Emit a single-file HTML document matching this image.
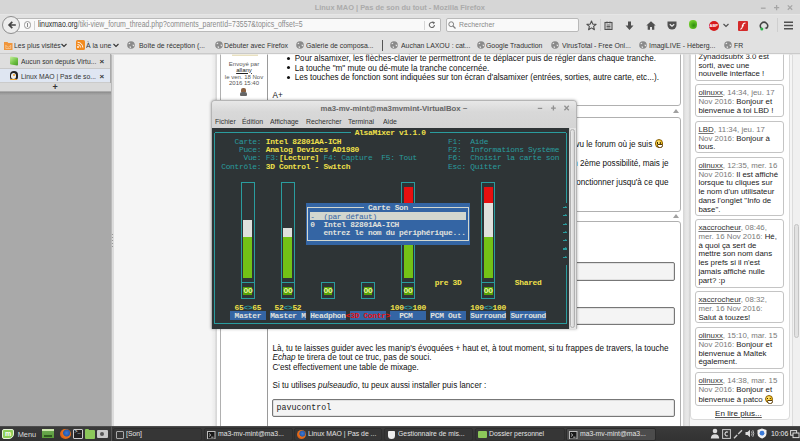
<!DOCTYPE html>
<html><head><meta charset="utf-8">
<style>
*{box-sizing:border-box}
html,body{margin:0;padding:0}
body{width:800px;height:441px;overflow:hidden;position:relative;background:#f3f3f3;font-family:"Liberation Sans",sans-serif;color:#222}
.a{position:absolute}
.nw{white-space:nowrap}
/* firefox chrome */
#title{left:0;top:0;width:800px;height:14px;background:#d6d6d6}
#nav{left:0;top:14px;width:800px;height:40.5px;background:#e1e1e1;border-top:1px solid #e6e6e6;border-bottom:2px solid #cacaca}
.bm{font-size:7.8px;color:#333;top:40.6px;transform-origin:0 0;transform:scaleX(0.885)}
.globe{width:8px;height:8px;top:41px}
/* sidebar */
#side{left:0;top:54px;width:111px;height:372px;background:#a9a9a9}
.tab{left:0;width:110px;height:14px;font-size:7.6px;color:#333}
/* forum */
.txt{font-size:8.14px;color:#111;line-height:9.6px}
.post{background:#fff;border:1px solid #cfcfcf;border-radius:3px}
.code{background:#f4f4f4;border:1px solid #777;border-radius:2px;box-shadow:inset 0 0 0 0.5px #ccc}
/* shout */
.sh{left:695px;width:89px;background:#fff;border:1px solid #c4c4c4;border-radius:3px}
.shx{left:698.4px;font-size:7.85px;line-height:8.75px;color:#222}
.shx u{color:#333;text-decoration-color:#777}
.shx .d{color:#7a7a7a}
.smile{display:inline-block;position:relative;width:8px;height:8px;border-radius:50%;background:radial-gradient(circle at 40% 35%,#ffe98a,#f0b400 75%);border:0.6px solid #8a6000;vertical-align:-1px}
.smile::before{content:"";position:absolute;left:1.8px;top:2px;width:1px;height:1.6px;background:#3a2a00;box-shadow:2.8px 0 0 #3a2a00}
.smile::after{content:"";position:absolute;left:1.2px;top:3.9px;width:4.4px;height:2px;background:#fff;border:0.6px solid #5a3a00;border-radius:1px 1px 2.5px 2.5px}
/* terminal */
#term{left:211px;top:100px;width:366px;height:229px;background:#d9d9d9;border:1px solid #b5b5b5;border-radius:4px 4px 0 0;box-shadow:0 0 3px rgba(0,0,0,.35)}
#scr{left:211.5px;top:128.4px;width:357.3px;height:200.4px;background:#2e3436;overflow:hidden}
.t{position:absolute;font-family:"Liberation Mono",monospace;font-size:7.9px;line-height:8.35px;height:8.35px;white-space:pre;letter-spacing:-0.291px}
/* taskbar */
#task{left:0;top:426px;width:800px;height:15px;background:linear-gradient(#5a5a5a 0,#3a3a3a 1.2px,#323232 100%)}
.tb{top:427.5px;height:13.5px;font-size:7.7px;color:#e4e4e4;line-height:10px;padding-left:12.5px;border-radius:2px;white-space:nowrap}
.tt{display:inline-block;transform-origin:0 50%;transform:scaleX(0.89)}
</style></head><body>

<!-- Title bar -->
<div class="a" id="title"></div>
<div class="a nw" style="left:314.7px;top:3.2px;font-size:7.45px;font-weight:bold;color:#ababab">Linux MAO | Pas de son du tout - Mozilla Firefox</div>
<svg class="a" style="left:758px;top:3px" width="36" height="10" viewBox="0 0 36 10"><path d="M2.9 5.2H7.6" stroke="#a6a6a6" stroke-width="1.3"/><path d="M16 4.6H21.2M18.6 2V7.2" stroke="#a6a6a6" stroke-width="1.3"/><path d="M29.8 2.4L34.2 6.8M34.2 2.4L29.8 6.8" stroke="#a6a6a6" stroke-width="1.3"/></svg>

<!-- Nav bar -->
<div class="a" id="nav"></div>
<!-- back button -->
<div class="a" style="left:2px;top:16px;width:18px;height:18px;border-radius:50%;background:#ededed;border:1px solid #8e8e8e;z-index:2"></div>
<svg class="a" style="left:6.5px;top:20px;z-index:3" width="10" height="10" viewBox="0 0 10 10"><path d="M8.8 5H2.3M5.3 1.8L2.1 5L5.3 8.2" stroke="#444" stroke-width="1.7" fill="none"/></svg>
<!-- url bar -->
<div class="a" style="left:17px;top:18px;width:424px;height:13.5px;background:#f9f9f9;border:1px solid #b9b9b9;border-left:none;border-radius:0 2px 2px 0"></div>
<div class="a" style="left:23.5px;top:21.2px;width:7.5px;height:7.5px;border-radius:50%;border:1px solid #9a9a9a"></div>
<div class="a" style="left:26.75px;top:24px;width:1px;height:3px;background:#888"></div><div class="a" style="left:26.75px;top:22.8px;width:1px;height:0.8px;background:#888"></div>
<div class="a" style="left:34px;top:20.5px;width:1px;height:9px;background:#d0d0d0"></div>
<div class="a nw" style="left:37.8px;top:20.2px;font-size:8.2px;color:#2a2a2a;transform-origin:0 0;transform:scaleX(0.847)">linuxmao.org<span style="color:#8a8a8a">/tiki-view_forum_thread.php?comments_parentId=73557&amp;topics_offset=5</span></div>
<div class="a" style="left:423.5px;top:20.5px;width:1px;height:9px;background:#d6d6d6"></div>
<svg class="a" style="left:428px;top:21px" width="8" height="8" viewBox="0 0 8 8"><path d="M6.5 4A2.6 2.6 0 1 1 5.3 1.7" stroke="#6a6a6a" stroke-width="1.1" fill="none"/><path d="M4.2 0.2L7 1.2L5.6 3.6Z" fill="#6a6a6a"/></svg>
<!-- search bar -->
<div class="a" style="left:445.5px;top:18px;width:133px;height:13.5px;background:#f9f9f9;border:1px solid #b9b9b9;border-radius:2px"></div>
<svg class="a" style="left:447.5px;top:21px" width="8" height="8" viewBox="0 0 8 8"><circle cx="3.2" cy="3.2" r="2.4" stroke="#808080" stroke-width="1" fill="none"/><path d="M5 5L7.5 7.5" stroke="#808080" stroke-width="1.2"/></svg>
<div class="a nw" style="left:458.5px;top:20.4px;font-size:8px;color:#8a8a8a;transform-origin:0 0;transform:scaleX(0.86)">Rechercher</div>
<!-- toolbar icons -->
<svg class="a" style="left:586px;top:20px" width="11" height="11" viewBox="0 0 11 11"><path d="M5.5 1L6.8 4.1L10.1 4.3L7.6 6.4L8.4 9.7L5.5 7.9L2.6 9.7L3.4 6.4L0.9 4.3L4.2 4.1Z" stroke="#505050" stroke-width="1.1" fill="none" stroke-linejoin="round"/></svg>
<div class="a" style="left:599.5px;top:19px;width:1px;height:12px;background:#cfcfcf"></div>
<svg class="a" style="left:604px;top:21px" width="9" height="9" viewBox="0 0 9 9"><rect x="1" y="1.5" width="7" height="7" stroke="#505050" stroke-width="1.1" fill="none"/><path d="M3 0.5V2.5M6 0.5V2.5M2.5 4H6.5M2.5 5.5H6.5M2.5 7H6.5" stroke="#505050" stroke-width="0.9"/></svg>
<svg class="a" style="left:625px;top:20.5px" width="9" height="10" viewBox="0 0 9 10"><path d="M3 0.5H6V4.5H8.5L4.5 9L0.5 4.5H3Z" fill="#505050"/></svg>
<svg class="a" style="left:645.5px;top:20.5px" width="10" height="9" viewBox="0 0 10 9"><path d="M5 0.3L9.7 4.6H8.3V8.7H6V6H4V8.7H1.7V4.6H0.3Z" fill="#505050"/></svg>
<svg class="a" style="left:667px;top:21px" width="10" height="9" viewBox="0 0 10 9"><path d="M0.5 0.5H9.5V4A4.5 4.5 0 0 1 0.5 4Z" fill="#505050"/><path d="M2.8 3.3L5 5.3L7.2 3.3" stroke="#eee" stroke-width="1.2" fill="none"/></svg>
<div class="a" style="left:688.6px;top:20.4px;width:8.2px;height:8.6px;border-radius:45% 45% 50% 50%;background:radial-gradient(circle at 60% 60%,#2e8a10 0,#58b820 45%,#8ee040 100%)"></div>
<div class="a" style="left:709px;top:20.5px;width:10px;height:10px;border-radius:50%;background:#d61a1a"></div>
<div class="a nw" style="left:709.6px;top:23.3px;font-size:4px;font-weight:bold;color:#fff">ABP</div>
<svg class="a" style="left:723px;top:23px" width="6" height="5" viewBox="0 0 6 5"><path d="M0.5 1L3 3.5L5.5 1" stroke="#505050" stroke-width="1.2" fill="none"/></svg>
<div class="a" style="left:738px;top:20.5px;width:10px;height:10px;background:#d42a2a;border-radius:1px"></div>
<svg class="a" style="left:738px;top:20.5px" width="10" height="10" viewBox="0 0 10 10"><path d="M7.5 2C5 2 4.5 4 4.3 6C4 8 3 8.2 2.2 8.2" stroke="#fff" stroke-width="1.1" fill="none"/><path d="M3.8 4.8H6" stroke="#fff" stroke-width="0.9"/></svg>
<svg class="a" style="left:759px;top:20.5px" width="10" height="10" viewBox="0 0 10 10"><path d="M2.2 7.2A3.6 3.6 0 1 1 7.8 7.2" stroke="#444" stroke-width="1.5" fill="none"/><path d="M8.8 5.5L7.8 8.3L5.4 7" fill="#505050"/><circle cx="2.8" cy="8" r="1.5" fill="#2cb34a"/></svg>
<div class="a" style="left:776.5px;top:18px;width:1px;height:14px;background:#cfcfcf"></div>
<svg class="a" style="left:784px;top:21px" width="9" height="9" viewBox="0 0 9 9"><path d="M0 1.2H9M0 4.5H9M0 7.8H9" stroke="#505050" stroke-width="1.4"/></svg>

<!-- bookmarks -->
<svg class="a" style="left:4px;top:40.5px" width="8.5" height="9.5" viewBox="0 0 8.5 9.5"><path d="M0 1H3.5L4.3 2H8.5V9.5H0Z" fill="#f0963c"/><path d="M1.8 4.5L4.2 6.3L6.7 4.5M1.8 4V7.5H6.7V4" stroke="#fbd0a0" stroke-width="0.7" fill="none"/></svg>
<div class="a nw bm" style="left:14px">Les plus visités</div>
<svg class="a" style="left:61px;top:42.5px" width="6" height="5" viewBox="0 0 6 5"><path d="M0.5 1L3 3.5L5.5 1" stroke="#333" stroke-width="1.1" fill="none"/></svg>
<div class="a" style="left:76px;top:40.3px;width:8.7px;height:9.3px;background:#f28a1e;border-radius:1.5px"></div>
<svg class="a" style="left:76.3px;top:41px" width="8" height="8" viewBox="0 0 8 8"><circle cx="2" cy="6" r="0.9" fill="#fff"/><path d="M1.5 3.4A3.2 3.2 0 0 1 4.6 6.5M1.5 1.2A5.4 5.4 0 0 1 6.8 6.5" stroke="#fff" stroke-width="0.9" fill="none"/></svg>
<div class="a nw bm" style="left:85.5px">À la une</div>
<svg class="a" style="left:112.5px;top:42.5px" width="6" height="5" viewBox="0 0 6 5"><path d="M0.5 1L3 3.5L5.5 1" stroke="#333" stroke-width="1.1" fill="none"/></svg>
<svg class="a globe" style="left:127px" viewBox="0 0 8 8"><circle cx="4" cy="4" r="3.8" fill="#8a8a8a"/><path d="M1.6 2.2Q2.6 1.2 3.4 2Q3 3.2 1.8 3.2Z M5.6 3.6Q6.8 3.4 7.2 4.6Q6.6 5.6 5.8 5Z M2.6 5.2Q3.8 5 4.2 6.2Q3.6 7.4 2.8 6.8Z" fill="#e8e8e8"/></svg><div class="a nw bm" style="left:138.5px">Boîte de réception (...</div>
<svg class="a globe" style="left:214.5px" viewBox="0 0 8 8"><circle cx="4" cy="4" r="3.8" fill="#8a8a8a"/><path d="M1.6 2.2Q2.6 1.2 3.4 2Q3 3.2 1.8 3.2Z M5.6 3.6Q6.8 3.4 7.2 4.6Q6.6 5.6 5.8 5Z M2.6 5.2Q3.8 5 4.2 6.2Q3.6 7.4 2.8 6.8Z" fill="#e8e8e8"/></svg><div class="a nw bm" style="left:223.8px">Débuter avec Firefox</div>
<svg class="a globe" style="left:296px" viewBox="0 0 8 8"><circle cx="4" cy="4" r="3.8" fill="#8a8a8a"/><path d="M1.6 2.2Q2.6 1.2 3.4 2Q3 3.2 1.8 3.2Z M5.6 3.6Q6.8 3.4 7.2 4.6Q6.6 5.6 5.8 5Z M2.6 5.2Q3.8 5 4.2 6.2Q3.6 7.4 2.8 6.8Z" fill="#e8e8e8"/></svg><div class="a nw bm" style="left:306px">Galerie de composa...</div>
<div class="a" style="left:382px;top:40px;width:1px;height:11px;background:#555"></div>
<svg class="a globe" style="left:389.8px" viewBox="0 0 8 8"><circle cx="4" cy="4" r="3.8" fill="#8a8a8a"/><path d="M1.6 2.2Q2.6 1.2 3.4 2Q3 3.2 1.8 3.2Z M5.6 3.6Q6.8 3.4 7.2 4.6Q6.6 5.6 5.8 5Z M2.6 5.2Q3.8 5 4.2 6.2Q3.6 7.4 2.8 6.8Z" fill="#e8e8e8"/></svg><div class="a nw bm" style="left:400.5px">Auchan LAXOU : cat...</div>
<svg class="a globe" style="left:476.6px" viewBox="0 0 8 8"><circle cx="4" cy="4" r="3.8" fill="#8a8a8a"/><path d="M1.6 2.2Q2.6 1.2 3.4 2Q3 3.2 1.8 3.2Z M5.6 3.6Q6.8 3.4 7.2 4.6Q6.6 5.6 5.8 5Z M2.6 5.2Q3.8 5 4.2 6.2Q3.6 7.4 2.8 6.8Z" fill="#e8e8e8"/></svg><div class="a nw bm" style="left:486.2px">Google Traduction</div>
<svg class="a globe" style="left:551px" viewBox="0 0 8 8"><circle cx="4" cy="4" r="3.8" fill="#8a8a8a"/><path d="M1.6 2.2Q2.6 1.2 3.4 2Q3 3.2 1.8 3.2Z M5.6 3.6Q6.8 3.4 7.2 4.6Q6.6 5.6 5.8 5Z M2.6 5.2Q3.8 5 4.2 6.2Q3.6 7.4 2.8 6.8Z" fill="#e8e8e8"/></svg><div class="a nw bm" style="left:561.5px">VirusTotal - Free Onl...</div>
<svg class="a globe" style="left:638.5px" viewBox="0 0 8 8"><circle cx="4" cy="4" r="3.8" fill="#8a8a8a"/><path d="M1.6 2.2Q2.6 1.2 3.4 2Q3 3.2 1.8 3.2Z M5.6 3.6Q6.8 3.4 7.2 4.6Q6.6 5.6 5.8 5Z M2.6 5.2Q3.8 5 4.2 6.2Q3.6 7.4 2.8 6.8Z" fill="#e8e8e8"/></svg><div class="a nw bm" style="left:648.5px">ImagiLIVE - Héberg...</div>
<svg class="a globe" style="left:723.5px" viewBox="0 0 8 8"><circle cx="4" cy="4" r="3.8" fill="#8a8a8a"/><path d="M1.6 2.2Q2.6 1.2 3.4 2Q3 3.2 1.8 3.2Z M5.6 3.6Q6.8 3.4 7.2 4.6Q6.6 5.6 5.8 5Z M2.6 5.2Q3.8 5 4.2 6.2Q3.6 7.4 2.8 6.8Z" fill="#e8e8e8"/></svg><div class="a nw bm" style="left:734px">FR</div>

<!-- sidebar -->
<div class="a" id="side"></div>
<div class="a tab" style="top:54.3px;height:14.4px;background:#dedede;border-bottom:1px solid #c8c8c8"></div>
<div class="a" style="left:10px;top:57px;width:7.5px;height:8px;background:linear-gradient(135deg,#c8f0a0,#6cc040 60%,#4a9a2a);border-radius:1px;transform:skewY(8deg)"></div>
<div class="a nw" style="left:21.3px;top:57.3px;font-size:7.9px;color:#333;transform-origin:0 0;transform:scaleX(0.86)">Aucun son depuis Virtu...</div>
<div class="a nw" style="left:99.5px;top:57px;font-size:8px;color:#333;font-weight:bold">×</div>
<div class="a tab" style="top:68.7px;background:#dfe6f2;border-bottom:1px solid #cbcbcb"></div>
<div class="a" style="left:9.5px;top:71px;width:8px;height:8.5px;background:#222;border-radius:4px 4px 3px 3px"></div>
<div class="a" style="left:11px;top:73.2px;width:5px;height:5.5px;background:#eee;border-radius:2.5px"></div>
<div class="a" style="left:12.5px;top:74px;width:2px;height:1.5px;background:#f0a020;border-radius:1px"></div>
<div class="a" style="left:10px;top:78.8px;width:7px;height:1.4px;background:#f0a020;border-radius:1px"></div>
<div class="a nw" style="left:21.3px;top:71.6px;font-size:7.9px;color:#333;transform-origin:0 0;transform:scaleX(0.86)">Linux MAO | Pas de so...</div>
<div class="a nw" style="left:99.5px;top:71.5px;font-size:8px;color:#333;font-weight:bold">×</div>
<div class="a" style="left:0;top:82.7px;width:110.5px;height:8.5px;background:#d9d9d9"></div>
<div class="a" style="left:0;top:91.2px;width:110.5px;height:4.5px;background:linear-gradient(#bdbdbd 0,#8e8e8e 1.3px,#9c9c9c 2.5px,#a9a9a9 4.5px)"></div>
<div class="a nw" style="left:52.5px;top:81.5px;font-size:9px;color:#333;font-weight:bold">+</div>


<!-- page -->
<div class="a" style="left:0;top:0;width:800px;height:441px;clip-path:inset(54.5px 0 15px 0)">
<div class="a" style="left:111px;top:54px;width:689px;height:372px;background:#f5f5f5"></div>
<div class="a" style="left:110.5px;top:54px;width:3.5px;height:372px;background:linear-gradient(90deg,#a2a2a2 0,#c8c8c8 0.8px,#dcdcdc 1.2px,#dcdcdc 2.8px,#ececec 3.5px)"></div>
<div class="a" style="left:112px;top:234px;width:1.2px;height:13px;background:repeating-linear-gradient(#999 0,#999 1px,transparent 1px,transparent 3px)"></div>

<!-- forum wrapper -->
<div class="a" style="left:211px;top:54px;width:6px;height:372px;background:linear-gradient(90deg,rgba(0,0,0,0) 0,rgba(0,0,0,.04) 60%,rgba(0,0,0,.13) 85%,rgba(0,0,0,.1) 100%)"></div>
<div class="a" style="left:217px;top:54px;width:466px;height:372px;background:#fff"></div>
<div class="a" style="left:683px;top:54px;width:7px;height:372px;background:linear-gradient(90deg,#d4d4d4 0,#e6e6e6 40%,#e8e8e8 75%,#cfcfcf 100%)"></div>
<!-- post 1 -->
<div class="a" style="left:220px;top:40px;width:461px;height:66px;border:1px solid #b0b0b0;border-radius:3px;background:#fff"></div>
<div class="a" style="left:267px;top:54px;width:1px;height:51px;background:#9a9a9a"></div>
<div class="a" style="left:232px;top:54px;width:26px;height:2px;background:#e8e0c0"></div>
<div class="a nw" style="left:221px;width:46px;text-align:center;top:60.6px;font-size:6px;line-height:7px;color:#555">Envoyé par</div>
<div class="a nw" style="left:221px;width:46px;text-align:center;top:66.5px;font-size:6px;line-height:7px;color:#222"><u>allany</u></div>
<div class="a nw" style="left:221px;width:46px;text-align:center;top:74.2px;font-size:6px;line-height:7px;color:#555">le ven. 18 Nov</div>
<div class="a nw" style="left:221px;width:46px;text-align:center;top:80.3px;font-size:6px;line-height:7px;color:#555">2016 15:40</div>
<div class="a" style="left:241px;top:88px;width:5px;height:4px;border-radius:2px 2px 0 0;background:#8a6040"></div>
<div class="a" style="left:240px;top:91.5px;width:7px;height:4px;border-radius:2px 2px 1px 1px;background:#666"></div>
<div class="a" style="left:287.2px;top:57.1px;width:3.2px;height:3.2px;border-radius:50%;background:#111"></div>
<div class="a" style="left:287.2px;top:66.3px;width:3.2px;height:3.2px;border-radius:50%;background:#111"></div>
<div class="a" style="left:287.2px;top:75.6px;width:3.2px;height:3.2px;border-radius:50%;background:#111"></div>
<div class="a nw txt" style="left:294.7px;top:54.2px">Pour alsamixer, les flèches-clavier te permettront de te déplacer puis de régler dans chaque tranche.<br>La touche "m" mute ou dé-mute la tranche concernée.<br>Les touches de fonction sont indiquées sur ton écran d'alsamixer (entrées, sorties, autre carte, etc...).</div>
<div class="a nw txt" style="left:272.5px;top:91px">A+</div>
<div class="a" style="left:672.5px;top:108.5px;width:0;height:0;border-left:3.8px solid transparent;border-right:3.8px solid transparent;border-bottom:4.5px solid #a0a0a0"></div>
<!-- post 2 -->
<div class="a" style="left:220px;top:116.5px;width:461px;height:95px;border:1px solid #b0b0b0;border-radius:3px;background:#fff"></div>
<div class="a nw txt" style="right:137px;top:139.4px">Ceci dit, tu n'as peut-être pas vu le forum où je suis <span class="smile" style="width:8.5px;height:8.5px"></span></div>
<div class="a nw txt" style="right:131.5px;top:159.3px">alors il te reste la <span style="color:#2a6fb8">lien </span> 2ème possibilité, mais je</div>
<div class="a nw txt" style="right:131.5px;top:178.3px">comme alsamixer qui doit fonctionner jusqu'à ce que</div>
<div class="a" style="left:672.5px;top:214px;width:0;height:0;border-left:3.8px solid transparent;border-right:3.8px solid transparent;border-bottom:4.5px solid #a0a0a0"></div>
<!-- post 3 -->
<div class="a" style="left:220px;top:221px;width:461px;height:220px;border:1px solid #b0b0b0;border-radius:3px;background:#fff"></div>
<div class="a" style="left:267px;top:222px;width:1px;height:204px;background:#9a9a9a"></div>
<div class="a code" style="left:272px;top:262px;width:403px;height:18.5px"></div>
<div class="a code" style="left:272px;top:306.5px;width:403px;height:18.5px"></div>
<div class="a nw txt" style="left:272.5px;top:343.5px">Là, tu te laisses guider avec les manip's évoquées + haut et, à tout moment, si tu frappes de travers, la touche<br><i>Echap</i> te tirera de tout ce truc, pas de souci.<br>C'est effectivement une table de mixage.</div>
<div class="a nw txt" style="left:272.5px;top:380.5px">Si tu utilises <i>pulseaudio</i>, tu peux aussi installer puis lancer :</div>
<div class="a code" style="left:272px;top:399px;width:403px;height:17.8px"></div>
<div class="a nw" style="left:276.5px;top:403px;font-family:'Liberation Mono',monospace;font-size:8.3px;color:#222">pavucontrol</div>

<!-- shoutbox -->
<div class="a" style="left:689.5px;top:30px;width:100px;height:390px;background:#fff;border:1px solid #dadada;border-radius:4px"></div>
<div class="a" style="left:792px;top:54px;width:8px;height:372px;background:#f0f0f0;border-left:1px solid #dcdcdc"></div>
<div class="a" style="left:793.5px;top:224px;width:5px;height:114px;background:#e2e2e2;border:1px solid #c4c4c4;border-radius:3px"></div>
<div class="a sh" style="top:40px;height:41.0px"></div>
<div class="a nw shx" style="top:52.8px">Zynaddsubfx 3.0 est<br>sorti, avec une<br>nouvelle interface !</div>
<div class="a sh" style="top:84.4px;height:32.6px"></div>
<div class="a nw shx" style="top:89.3px"><u>olinuxx</u><span class="d">, 14:34, jeu. 17</span><br><span class="d">Nov 2016: </span>Bonjour et<br>bienvenue à toi LBD !</div>
<div class="a sh" style="top:120.9px;height:32.1px"></div>
<div class="a nw shx" style="top:125.8px"><u>LBD</u><span class="d">, 11:34, jeu. 17</span><br><span class="d">Nov 2016: </span>Bonjour à<br>tous.</div>
<div class="a sh" style="top:157px;height:58.6px"></div>
<div class="a nw shx" style="top:161.9px"><u>olinuxx</u><span class="d">, 12:35, mer. 16</span><br><span class="d">Nov 2016: </span>Il est affiché<br>lorsque tu cliques sur<br>le nom d'un utilisateur<br>dans l'onglet "Info de<br>base".</div>
<div class="a sh" style="top:219.2px;height:68.4px"></div>
<div class="a nw shx" style="top:224.1px"><u>xaccrocheur</u><span class="d">, 08:46,</span><br><span class="d">mer. 16 Nov 2016: </span>Hé,<br>à quoi ça sert de<br>mettre son nom dans<br>les prefs si il n'est<br>jamais affiché nulle<br>part? :p</div>
<div class="a sh" style="top:291.1px;height:32.3px"></div>
<div class="a nw shx" style="top:296.0px"><u>xaccrocheur</u><span class="d">, 08:32,</span><br><span class="d">mer. 16 Nov 2016:</span><br>Salut à touzes!</div>
<div class="a sh" style="top:327.2px;height:41.5px"></div>
<div class="a nw shx" style="top:332.1px"><u>olinuxx</u><span class="d">, 15:10, mar. 15</span><br><span class="d">Nov 2016: </span>Bonjour et<br>bienvenue à Maltek<br>également.</div>
<div class="a sh" style="top:372.3px;height:33.4px"></div>
<div class="a nw shx" style="top:377.2px"><u>olinuxx</u><span class="d">, 14:38, mar. 15</span><br><span class="d">Nov 2016: </span>Bonjour et<br>bienvenue à patco <span class="smile"></span></div>
<div class="a nw" style="left:715px;top:408.6px;font-size:8.1px;color:#222;text-decoration:underline;text-decoration-color:#555">En lire plus...</div>
<!--SHOUT-->
</div>

<!-- terminal window -->
<div class="a" id="term"></div>
<div class="a" style="left:212px;top:101px;width:364px;height:27px;border-radius:3px 3px 0 0;background:linear-gradient(#e8e8e8,#d8d8d8 40%,#d4d4d4)"></div>
<div class="a nw" style="left:320.6px;top:103.5px;font-size:7.75px;font-weight:bold;color:#666">ma3-mv-mint@ma3mvmint-VirtualBox ~</div>
<svg class="a" style="left:536px;top:104px" width="34" height="8" viewBox="0 0 34 8"><path d="M1.8 4.4H6.2" stroke="#909090" stroke-width="1.2"/><path d="M15 4.1H19.8M17.4 1.6V6.6" stroke="#909090" stroke-width="1.3"/><path d="M28.4 1.8L32.8 6.2M32.8 1.8L28.4 6.2" stroke="#909090" stroke-width="1.3"/></svg>
<div class="a nw" style="left:215.1px;top:116.55px;font-size:7.8px;color:#333;transform-origin:0 0;transform:scaleX(0.885)">Fichier</div>
<div class="a nw" style="left:242px;top:116.55px;font-size:7.8px;color:#333;transform-origin:0 0;transform:scaleX(0.885)">Édition</div>
<div class="a nw" style="left:270px;top:116.55px;font-size:7.8px;color:#333;transform-origin:0 0;transform:scaleX(0.885)">Affichage</div>
<div class="a nw" style="left:306.3px;top:116.55px;font-size:7.8px;color:#333;transform-origin:0 0;transform:scaleX(0.885)">Rechercher</div>
<div class="a nw" style="left:348.4px;top:116.55px;font-size:7.8px;color:#333;transform-origin:0 0;transform:scaleX(0.885)">Terminal</div>
<div class="a nw" style="left:382.7px;top:116.55px;font-size:7.8px;color:#333;transform-origin:0 0;transform:scaleX(0.885)">Aide</div>
<div class="a" id="scr"></div>
<div class="a" style="left:568.8px;top:128.4px;width:7.5px;height:200.4px;background:#e4e4e4;border-left:1px solid #cfcfcf"></div>
<div class="a" style="left:570.2px;top:129px;width:5px;height:198.5px;background:linear-gradient(90deg,#ececec,#d4d4d4);border:1px solid #b0b0b0;border-radius:3px"></div>
<div class="a" style="left:214.52px;top:132.09px;width:136.19px;height:1.0px;background:#2a9c9e"></div>
<div class="a" style="left:430.30px;top:132.09px;width:136.19px;height:1.0px;background:#2a9c9e"></div>
<div class="a" style="left:214.02px;top:132.59px;width:1.0px;height:191.86px;background:#2a9c9e"></div>
<div class="a" style="left:565.50px;top:132.59px;width:1.0px;height:70.39px;background:#2a9c9e"></div>
<div class="a" style="left:565.50px;top:264.88px;width:1.0px;height:59.57px;background:#2a9c9e"></div>
<div class="a" style="left:214.52px;top:323.45px;width:351.97px;height:1.0px;background:#2a9c9e"></div>
<div class="t" style="left:354.67px;top:129.33px;color:#f0e04a;font-weight:bold;">AlsaMixer v1.1.0</div>
<div class="t" style="left:234.55px;top:137.65px;color:#2a9c9e;">Carte:</div>
<div class="t" style="left:265.69px;top:137.65px;color:#f0e04a;font-weight:bold;">Intel 82801AA-ICH</div>
<div class="t" style="left:238.99px;top:145.97px;color:#2a9c9e;">Puce:</div>
<div class="t" style="left:265.69px;top:145.97px;color:#f0e04a;font-weight:bold;">Analog Devices AD1980</div>
<div class="t" style="left:243.44px;top:154.29px;color:#2a9c9e;">Vue:</div>
<div class="t" style="left:265.69px;top:154.29px;color:#2a9c9e;">F3:</div>
<div class="t" style="left:279.04px;top:154.29px;color:#f0e04a;font-weight:bold;">[Lecture]</div>
<div class="t" style="left:323.52px;top:154.29px;color:#2a9c9e;">F4: Capture  F5: Tout</div>
<div class="t" style="left:221.20px;top:162.61px;color:#2a9c9e;">Contrôle:</div>
<div class="t" style="left:265.69px;top:162.61px;color:#f0e04a;font-weight:bold;">3D Control - Switch</div>
<div class="t" style="left:448.10px;top:137.65px;color:#2a9c9e;">F1:  Aide</div>
<div class="t" style="left:448.10px;top:145.97px;color:#2a9c9e;">F2:  Informations Système</div>
<div class="t" style="left:448.10px;top:154.29px;color:#2a9c9e;">F6:  Choisir la carte son</div>
<div class="t" style="left:448.10px;top:162.61px;color:#2a9c9e;">Esc: Quitter</div>
<div class="a" style="left:563.20px;top:206.87px;width:4px;height:1.3px;background:#2a9c9e"></div>
<div class="a" style="left:565.00px;top:205.87px;width:0;height:0;border-top:1.6px solid transparent;border-bottom:1.6px solid transparent;border-left:2.4px solid #2a9c9e"></div>
<div class="a" style="left:563.20px;top:215.19px;width:4px;height:1.3px;background:#2a9c9e"></div>
<div class="a" style="left:565.00px;top:214.19px;width:0;height:0;border-top:1.6px solid transparent;border-bottom:1.6px solid transparent;border-left:2.4px solid #2a9c9e"></div>
<div class="a" style="left:563.20px;top:223.51px;width:4px;height:1.3px;background:#2a9c9e"></div>
<div class="a" style="left:565.00px;top:222.51px;width:0;height:0;border-top:1.6px solid transparent;border-bottom:1.6px solid transparent;border-left:2.4px solid #2a9c9e"></div>
<div class="a" style="left:563.20px;top:231.83px;width:4px;height:1.3px;background:#2a9c9e"></div>
<div class="a" style="left:565.00px;top:230.83px;width:0;height:0;border-top:1.6px solid transparent;border-bottom:1.6px solid transparent;border-left:2.4px solid #2a9c9e"></div>
<div class="a" style="left:563.20px;top:240.15px;width:4px;height:1.3px;background:#2a9c9e"></div>
<div class="a" style="left:565.00px;top:239.15px;width:0;height:0;border-top:1.6px solid transparent;border-bottom:1.6px solid transparent;border-left:2.4px solid #2a9c9e"></div>
<div class="a" style="left:563.20px;top:248.47px;width:4px;height:1.3px;background:#2a9c9e"></div>
<div class="a" style="left:565.00px;top:247.47px;width:0;height:0;border-top:1.6px solid transparent;border-bottom:1.6px solid transparent;border-left:2.4px solid #2a9c9e"></div>
<div class="a" style="left:563.20px;top:256.79px;width:4px;height:1.3px;background:#2a9c9e"></div>
<div class="a" style="left:565.00px;top:255.79px;width:0;height:0;border-top:1.6px solid transparent;border-bottom:1.6px solid transparent;border-left:2.4px solid #2a9c9e"></div>
<div class="a" style="left:241.22px;top:182.01px;width:13.85px;height:1.0px;background:#2a9c9e"></div>
<div class="a" style="left:241.22px;top:298.49px;width:13.85px;height:1.0px;background:#2a9c9e"></div>
<div class="a" style="left:240.72px;top:182.51px;width:1.0px;height:116.98px;background:#2a9c9e"></div>
<div class="a" style="left:254.07px;top:182.51px;width:1.0px;height:116.98px;background:#2a9c9e"></div>
<div class="a" style="left:241.22px;top:281.85px;width:13.85px;height:1.0px;background:#2a9c9e"></div>
<div class="a" style="left:243.44px;top:219.95px;width:8.90px;height:16.64px;background:#e0e1dd;"></div>
<div class="a" style="left:243.44px;top:236.59px;width:8.90px;height:41.60px;background:#73c216;"></div>
<div class="a" style="left:243.44px;top:286.51px;width:8.90px;height:8.32px;background:#56a208;"></div>
<div class="t" style="left:243.44px;top:287.41px;color:#e8f0a0;font-weight:bold;">OO</div>
<div class="a" style="left:281.26px;top:182.01px;width:13.85px;height:1.0px;background:#2a9c9e"></div>
<div class="a" style="left:281.26px;top:298.49px;width:13.85px;height:1.0px;background:#2a9c9e"></div>
<div class="a" style="left:280.76px;top:182.51px;width:1.0px;height:116.98px;background:#2a9c9e"></div>
<div class="a" style="left:294.11px;top:182.51px;width:1.0px;height:116.98px;background:#2a9c9e"></div>
<div class="a" style="left:281.26px;top:281.85px;width:13.85px;height:1.0px;background:#2a9c9e"></div>
<div class="a" style="left:283.48px;top:228.27px;width:8.90px;height:8.32px;background:#e0e1dd;"></div>
<div class="a" style="left:283.48px;top:236.59px;width:8.90px;height:41.60px;background:#73c216;"></div>
<div class="a" style="left:283.48px;top:286.51px;width:8.90px;height:8.32px;background:#56a208;"></div>
<div class="t" style="left:283.48px;top:287.41px;color:#e8f0a0;font-weight:bold;">OO</div>
<div class="a" style="left:321.30px;top:281.85px;width:13.85px;height:1.0px;background:#2a9c9e"></div>
<div class="a" style="left:321.30px;top:298.49px;width:13.85px;height:1.0px;background:#2a9c9e"></div>
<div class="a" style="left:320.80px;top:282.35px;width:1.0px;height:17.14px;background:#2a9c9e"></div>
<div class="a" style="left:334.15px;top:282.35px;width:1.0px;height:17.14px;background:#2a9c9e"></div>
<div class="a" style="left:323.52px;top:286.51px;width:8.90px;height:8.32px;background:#56a208;"></div>
<div class="t" style="left:323.52px;top:287.41px;color:#e8f0a0;font-weight:bold;">OO</div>
<div class="a" style="left:361.34px;top:281.85px;width:13.85px;height:1.0px;background:#2a9c9e"></div>
<div class="a" style="left:361.34px;top:298.49px;width:13.85px;height:1.0px;background:#2a9c9e"></div>
<div class="a" style="left:360.84px;top:282.35px;width:1.0px;height:17.14px;background:#2a9c9e"></div>
<div class="a" style="left:374.19px;top:282.35px;width:1.0px;height:17.14px;background:#2a9c9e"></div>
<div class="a" style="left:363.57px;top:286.51px;width:8.90px;height:8.32px;background:#56a208;"></div>
<div class="t" style="left:363.57px;top:287.41px;color:#e8f0a0;font-weight:bold;">OO</div>
<div class="a" style="left:401.38px;top:182.01px;width:13.85px;height:1.0px;background:#2a9c9e"></div>
<div class="a" style="left:401.38px;top:298.49px;width:13.85px;height:1.0px;background:#2a9c9e"></div>
<div class="a" style="left:400.88px;top:182.51px;width:1.0px;height:116.98px;background:#2a9c9e"></div>
<div class="a" style="left:414.23px;top:182.51px;width:1.0px;height:116.98px;background:#2a9c9e"></div>
<div class="a" style="left:401.38px;top:281.85px;width:13.85px;height:1.0px;background:#2a9c9e"></div>
<div class="a" style="left:403.61px;top:186.67px;width:8.90px;height:16.64px;background:#e81010;"></div>
<div class="a" style="left:403.61px;top:203.31px;width:8.90px;height:33.28px;background:#e0e1dd;"></div>
<div class="a" style="left:403.61px;top:236.59px;width:8.90px;height:41.60px;background:#73c216;"></div>
<div class="a" style="left:403.61px;top:286.51px;width:8.90px;height:8.32px;background:#56a208;"></div>
<div class="t" style="left:403.61px;top:287.41px;color:#e8f0a0;font-weight:bold;">OO</div>
<div class="a" style="left:481.46px;top:182.01px;width:13.85px;height:1.0px;background:#2a9c9e"></div>
<div class="a" style="left:481.46px;top:298.49px;width:13.85px;height:1.0px;background:#2a9c9e"></div>
<div class="a" style="left:480.96px;top:182.51px;width:1.0px;height:116.98px;background:#2a9c9e"></div>
<div class="a" style="left:494.31px;top:182.51px;width:1.0px;height:116.98px;background:#2a9c9e"></div>
<div class="a" style="left:481.46px;top:281.85px;width:13.85px;height:1.0px;background:#2a9c9e"></div>
<div class="a" style="left:483.69px;top:186.67px;width:8.90px;height:16.64px;background:#e81010;"></div>
<div class="a" style="left:483.69px;top:203.31px;width:8.90px;height:33.28px;background:#e0e1dd;"></div>
<div class="a" style="left:483.69px;top:236.59px;width:8.90px;height:41.60px;background:#73c216;"></div>
<div class="a" style="left:483.69px;top:286.51px;width:8.90px;height:8.32px;background:#56a208;"></div>
<div class="t" style="left:483.69px;top:287.41px;color:#e8f0a0;font-weight:bold;">OO</div>
<div class="t" style="left:234.55px;top:304.05px;color:#f0e04a;font-weight:bold;">65</div>
<div class="t" style="left:243.44px;top:304.05px;color:#2a9c9e;font-weight:bold;">&lt;&gt;</div>
<div class="t" style="left:252.34px;top:304.05px;color:#f0e04a;font-weight:bold;">65</div>
<div class="t" style="left:274.59px;top:304.05px;color:#f0e04a;font-weight:bold;">52</div>
<div class="t" style="left:283.48px;top:304.05px;color:#2a9c9e;font-weight:bold;">&lt;&gt;</div>
<div class="t" style="left:292.38px;top:304.05px;color:#f0e04a;font-weight:bold;">52</div>
<div class="t" style="left:390.26px;top:304.05px;color:#f0e04a;font-weight:bold;">100</div>
<div class="t" style="left:403.61px;top:304.05px;color:#2a9c9e;font-weight:bold;">&lt;&gt;</div>
<div class="t" style="left:412.50px;top:304.05px;color:#f0e04a;font-weight:bold;">100</div>
<div class="t" style="left:470.34px;top:304.05px;color:#f0e04a;font-weight:bold;">100</div>
<div class="t" style="left:483.69px;top:304.05px;color:#2a9c9e;font-weight:bold;">&lt;&gt;</div>
<div class="t" style="left:492.59px;top:304.05px;color:#f0e04a;font-weight:bold;">100</div>
<div class="t" style="left:434.75px;top:279.09px;color:#f0e04a;font-weight:bold;">pre 3D</div>
<div class="t" style="left:514.83px;top:279.09px;color:#f0e04a;font-weight:bold;">Shared</div>
<div class="a" style="left:230.10px;top:311.47px;width:35.59px;height:8.32px;background:#3465a4;"></div>
<div class="t" style="left:230.10px;top:312.37px;color:#e0e1dd;font-weight:bold;"> Master </div>
<div class="a" style="left:270.14px;top:311.47px;width:35.59px;height:8.32px;background:#3465a4;"></div>
<div class="t" style="left:270.14px;top:312.37px;color:#e0e1dd;font-weight:bold;">Master M</div>
<div class="a" style="left:310.18px;top:311.47px;width:35.59px;height:8.32px;background:#3465a4;"></div>
<div class="t" style="left:310.18px;top:312.37px;color:#e0e1dd;font-weight:bold;">Headphon</div>
<div class="a" style="left:350.22px;top:311.47px;width:35.59px;height:8.32px;background:#3465a4;"></div>
<div class="t" style="left:350.22px;top:312.37px;color:#e81010;font-weight:bold;">3D Contr</div>
<div class="a" style="left:390.26px;top:311.47px;width:35.59px;height:8.32px;background:#3465a4;"></div>
<div class="t" style="left:390.26px;top:312.37px;color:#e0e1dd;font-weight:bold;">  PCM   </div>
<div class="a" style="left:430.30px;top:311.47px;width:35.59px;height:8.32px;background:#3465a4;"></div>
<div class="t" style="left:430.30px;top:312.37px;color:#e0e1dd;font-weight:bold;">PCM Out </div>
<div class="a" style="left:470.34px;top:311.47px;width:35.59px;height:8.32px;background:#3465a4;"></div>
<div class="t" style="left:470.34px;top:312.37px;color:#e0e1dd;font-weight:bold;">Surround</div>
<div class="a" style="left:510.38px;top:311.47px;width:35.59px;height:8.32px;background:#3465a4;"></div>
<div class="t" style="left:510.38px;top:312.37px;color:#e0e1dd;font-weight:bold;">Surround</div>
<div class="t" style="left:345.77px;top:312.37px;color:#e81010;font-weight:bold;">&lt;</div>
<div class="t" style="left:385.81px;top:312.37px;color:#e81010;font-weight:bold;">&gt;</div>
<div class="a" style="left:305.73px;top:203.31px;width:164.61px;height:41.60px;background:#3465a4;"></div>
<div class="a" style="left:307.95px;top:206.97px;width:160.66px;height:1.0px;background:#d3d7cf"></div>
<div class="a" style="left:307.95px;top:240.25px;width:160.66px;height:1.0px;background:#d3d7cf"></div>
<div class="a" style="left:307.45px;top:207.47px;width:1.0px;height:33.78px;background:#d3d7cf"></div>
<div class="a" style="left:467.62px;top:207.47px;width:1.0px;height:33.78px;background:#d3d7cf"></div>
<div class="a" style="left:363.57px;top:203.31px;width:48.94px;height:8.32px;background:#3465a4;"></div>
<div class="t" style="left:368.01px;top:204.21px;color:#e0e1dd;font-weight:bold;">Carte Son</div>
<div class="a" style="left:310.18px;top:211.63px;width:155.72px;height:8.32px;background:#d3d7cf;"></div>
<div class="t" style="left:310.18px;top:212.53px;color:#3465a4;">-  (par défaut)</div>
<div class="t" style="left:310.18px;top:220.85px;color:#e0e1dd;font-weight:bold;">0  Intel 82801AA-ICH</div>
<div class="t" style="left:323.52px;top:229.17px;color:#e0e1dd;font-weight:bold;">entrez le nom du périphérique...</div>


<!-- taskbar -->
<div class="a" id="task"></div>
<div class="a" style="left:2px;top:428.8px;width:11.5px;height:10px;background:#8fcf5a;border-radius:2px 2px 5px 2px;border:1px solid #e8f5da"></div>
<div class="a nw" style="left:5px;top:429.5px;font-size:7px;font-weight:bold;color:#fff">m</div>
<div class="a nw" style="left:17.7px;top:429.8px;font-size:7.4px;color:#ddd">Menu</div>
<div class="a" style="left:41.7px;top:429px;width:12px;height:9px;background:linear-gradient(#cfe8b0 0,#cfe8b0 20%,#6aa84f 20%,#5a9a3a 100%)"></div>
<div class="a" style="left:43.5px;top:435px;width:8px;height:2px;background:#2e5a1e"></div>
<div class="a" style="left:60px;top:428.5px;width:10.8px;height:10.5px;border-radius:50%;background:radial-gradient(circle at 60% 40%,#3b78d8 0,#2a5aa8 35%,#e8701a 45%,#c84a10 100%)"></div>
<div class="a" style="left:73px;top:428.5px;width:10px;height:10px;background:#222;border:1px solid #ccc;border-radius:1px"></div>
<div class="a nw" style="left:74.5px;top:428.5px;font-size:5px;color:#fff;font-family:'Liberation Mono'">&gt;_</div>
<div class="a" style="left:85px;top:430px;width:10.2px;height:8.5px;background:#8cc85a;border-radius:1px"></div>
<div class="a" style="left:85px;top:429px;width:4px;height:2px;background:#8cc85a;border-radius:1px 1px 0 0"></div>
<div class="a" style="left:96.7px;top:430px;width:11px;height:8px;background:#c8c8c8;border-radius:1px"></div>
<div class="a" style="left:100px;top:432px;width:4px;height:4px;background:#555;border-radius:50%"></div>
<div class="a" style="left:111px;top:426px;width:1px;height:15px;background:#555"></div>
<div class="a tb" style="left:112.7px;width:89.3px;background:#363636;border:1px solid #2e2e2e"><span style="position:absolute;left:2px;top:2px;width:8px;height:8px;border:1px solid #aaa;border-radius:1px"></span><span class="tt">[Son]</span></div>
<div class="a tb" style="left:204px;width:88.7px;background:#363636;border:1px solid #2e2e2e"><svg style="position:absolute;left:2px;top:2px" width="8.5" height="8.5" viewBox="0 0 8.5 8.5"><rect x="0.5" y="0.5" width="7.5" height="7.5" fill="#1a1a1a" stroke="#bbb" stroke-width="1"/><path d="M2 2.5L3.8 4L2 5.5M4.2 6.2H6.5" stroke="#ddd" stroke-width="0.8" fill="none"/></svg><span class="tt">ma3-mv-mint@ma3...</span></div>
<div class="a tb" style="left:294px;width:87.8px;background:#363636;border:1px solid #2e2e2e"><span style="position:absolute;left:2px;top:1.5px;width:9px;height:9px;border-radius:50%;background:radial-gradient(circle at 60% 40%,#3b78d8 0,#2a5aa8 35%,#e8701a 45%,#c84a10 100%)"></span><span class="tt">Linux MAO | Pas de ...</span></div>
<div class="a tb" style="left:384.4px;width:89.1px;background:#363636;border:1px solid #2e2e2e"><span style="position:absolute;left:3px;top:2px;width:7px;height:8px;background:#eee;border-radius:1px 1px 4px 4px"></span><span class="tt">Gestionnaire de mis...</span></div>
<div class="a tb" style="left:475.4px;width:89.9px;background:#363636;border:1px solid #2e2e2e"><span style="position:absolute;left:2px;top:2.5px;width:9px;height:7px;background:#8cc85a;border-radius:1px"></span><span class="tt">Dossier personnel</span></div>
<div class="a tb" style="left:566px;width:89.5px;background:#4c4c4c;border:1px solid #2b2b2b"><svg style="position:absolute;left:2px;top:2px" width="8.5" height="8.5" viewBox="0 0 8.5 8.5"><rect x="0.5" y="0.5" width="7.5" height="7.5" fill="#1a1a1a" stroke="#bbb" stroke-width="1"/><path d="M2 2.5L3.8 4L2 5.5M4.2 6.2H6.5" stroke="#ddd" stroke-width="0.8" fill="none"/></svg><span class="tt">ma3-mv-mint@ma3...</span></div>
<svg class="a" style="left:710px;top:428px" width="10" height="11" viewBox="0 0 10 11"><circle cx="5" cy="3" r="2.3" fill="#ddd"/><path d="M0.8 10.5Q1 6.2 5 6.2Q9 6.2 9.2 10.5Z" fill="#ddd"/></svg>
<svg class="a" style="left:722px;top:428.5px" width="9" height="10" viewBox="0 0 9 10"><rect x="0.6" y="0.6" width="7.8" height="8.8" fill="none" stroke="#ccc" stroke-width="1"/><path d="M6 3.2A2 2 0 1 0 6 6.6" stroke="#ddd" stroke-width="1.1" fill="none"/></svg>
<svg class="a" style="left:733px;top:428.5px" width="10" height="10" viewBox="0 0 10 10"><path d="M1 9.2L4.2 6M5.2 5L9 1.2" stroke="#ccc" stroke-width="1.4"/></svg>
<svg class="a" style="left:744.5px;top:429px" width="10" height="9" viewBox="0 0 10 9"><path d="M0.5 3H2.5L5 0.8V8.2L2.5 6H0.5Z" fill="#ddd"/><path d="M6.5 2.5Q7.8 4.5 6.5 6.5M7.8 1.2Q9.8 4.5 7.8 7.8" stroke="#ccc" stroke-width="0.9" fill="none"/></svg>
<svg class="a" style="left:756.5px;top:428px" width="10" height="11" viewBox="0 0 10 11"><path d="M5 0.5L9.5 2V5.5C9.5 8 7.5 9.8 5 10.5C2.5 9.8 0.5 8 0.5 5.5V2Z" fill="#f0f0f0"/><circle cx="5" cy="5.2" r="2.4" fill="#3a7ad8"/></svg>
<div class="a nw" style="left:770.6px;top:429.3px;font-size:7.7px;color:#eee;transform-origin:0 0;transform:scaleX(0.9)">10:06</div>
<svg class="a" style="left:790px;top:428.5px" width="10" height="10" viewBox="0 0 10 10"><rect x="0.6" y="1.6" width="6" height="4.6" fill="none" stroke="#ddd" stroke-width="1"/><rect x="3" y="4" width="6" height="4.6" fill="#333" stroke="#ddd" stroke-width="1"/></svg>
</body></html>
